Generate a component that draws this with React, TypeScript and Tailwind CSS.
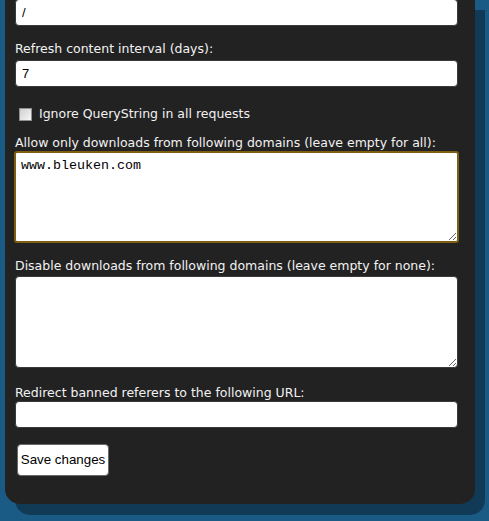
import { useState } from 'react'

const LABEL = "text-[12.5px] leading-4 text-[#f2f2f2] font-['DejaVu_Sans',Verdana,sans-serif]"
const FIELD =
  "block w-[443px] bg-white border border-[#3a3a3a] rounded-[4px] px-[6px] text-[13px] text-black font-['Liberation_Sans',Arial,sans-serif] outline-none"

export default function App() {
  const [path, setPath] = useState('/')
  const [days, setDays] = useState('7')
  const [ignoreQs, setIgnoreQs] = useState(false)
  const [allow, setAllow] = useState('www.bleuken.com')
  const [deny, setDeny] = useState('')
  const [redirect, setRedirect] = useState('')

  return (
    <div className="w-[489px] h-[521px] overflow-hidden bg-[#1a5b85]">
      <div className="ml-[5px] w-[470px] -mt-[1px] rounded-b-[15px] bg-[#222222] shadow-[10px_11px_0_#113a57] px-[10px] pb-[28px]">
        <input
          value={path}
          onChange={(e) => setPath(e.target.value)}
          className={`${FIELD} h-[27px]`}
        />

        <div className={`${LABEL} mt-[15px]`}>Refresh content interval (days):</div>
        <input
          value={days}
          onChange={(e) => setDays(e.target.value)}
          className={`${FIELD} h-[27px] mt-[3px]`}
        />

        <label className={`${LABEL} flex items-center mt-[19px] ml-[4px] cursor-pointer`}>
          <span
            onClick={() => setIgnoreQs(!ignoreQs)}
            className="w-[13px] h-[13px] border border-[#8e8f8f] bg-gradient-to-br from-[#cfcfcf] to-[#f6f6f6] flex items-center justify-center text-[10px] leading-none text-black"
          >
            {ignoreQs ? '✓' : ''}
          </span>
          <span className="ml-[7px]">Ignore QueryString in all requests</span>
        </label>

        <div className={`${LABEL} mt-[13px]`}>Allow only downloads from following domains (leave empty for all):</div>
        <textarea
          value={allow}
          onChange={(e) => setAllow(e.target.value)}
          className="block -ml-[1px] w-[445px] h-[92px] bg-white border-2 border-[#7d5e12] rounded-[3px] px-[5px] py-[5px] text-[13.33px] leading-[15px] text-black font-['Liberation_Mono','Courier_New',monospace] outline-none"
        />

        <div className={`${LABEL} mt-[15px]`}>Disable downloads from following domains (leave empty for none):</div>
        <textarea
          value={deny}
          onChange={(e) => setDeny(e.target.value)}
          className="block mt-[2px] w-[443px] h-[92px] bg-white border border-[#3a3a3a] rounded-[4px] px-[6px] py-[5px] text-[13.33px] leading-[15px] text-black font-['Liberation_Mono','Courier_New',monospace] outline-none"
        />

        <div className={`${LABEL} mt-[17px]`}>Redirect banned referers to the following URL:</div>
        <input
          value={redirect}
          onChange={(e) => setRedirect(e.target.value)}
          className={`${FIELD} h-[27px]`}
        />

        <button className="block mt-[16px] ml-[2px] w-[92px] h-[32px] bg-white border border-[#6a6a6a] rounded-[4px] text-[13.33px] text-black font-['Liberation_Sans',Arial,sans-serif]">
          Save changes
        </button>
      </div>
    </div>
  )
}
